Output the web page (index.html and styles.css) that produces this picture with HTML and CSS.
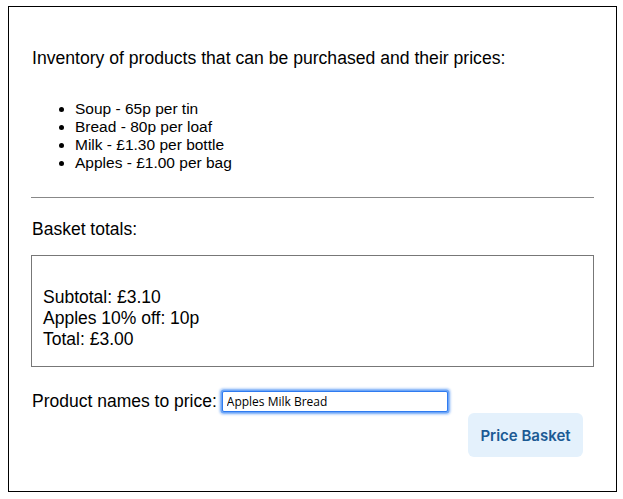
FILE: index.html
```html
<!DOCTYPE html>
<html>
<head>
<meta charset="utf-8">
<link rel="stylesheet" href="styles.css">
</head>
<body>
<div class="panel">
  <p class="intro">Inventory of products that can be purchased and their prices:</p>
  <ul class="products">
    <li>Soup - 65p per tin</li>
    <li>Bread - 80p per loaf</li>
    <li>Milk - £1.30 per bottle</li>
    <li>Apples - £1.00 per bag</li>
  </ul>
  <hr class="rule">
  <p class="heading">Basket totals:</p>
  <div class="totals">
    <div>Subtotal: £3.10</div>
    <div>Apples 10% off: 10p</div>
    <div>Total: £3.00</div>
  </div>
  <div class="form-row">
    <label class="label" for="names">Product names to price:</label>
    <input class="names" id="names" type="text" value="Apples Milk Bread">
  </div>
  <div class="actions">
    <button class="price-btn" type="button">Price Basket</button>
  </div>
</div>
</body>
</html>
```
FILE: styles.css
```css
html, body {
  margin: 0;
  padding: 0;
  background: #fff;
}
body {
  padding: 6px 0 0 8px;
  font-family: "Liberation Sans", Arial, sans-serif;
  color: #000;
}
.panel {
  box-sizing: border-box;
  width: 609px;
  height: 486px;
  border: 1px solid #000;
  padding: 0 22px;
}
.intro {
  font-size: 17.6px;
  margin: 41px 0 0 1px;
  line-height: 20px;
}
.products {
  margin: 32px 0 0 0;
  padding-left: 44px;
  font-size: 15.5px;
  line-height: 18px;
}
.rule {
  margin: 25px 0 0 0;
  border: 0;
  border-top: 1px solid #888;
  height: 0;
}
.heading {
  font-size: 17.5px;
  line-height: 20px;
  margin: 21px 0 0 1px;
}
.totals {
  margin-top: 16px;
  border: 1px solid #777;
  height: 112px;
  box-sizing: border-box;
  padding: 31px 11px 0;
  font-size: 17.5px;
  line-height: 21px;
}
.form-row {
  display: flex;
  align-items: center;
  margin-top: 24px;
  margin-left: 1px;
}
.label {
  font-size: 17.5px;
  margin-right: 5px;
}
.names {
  box-sizing: border-box;
  width: 226px;
  height: 21px;
  border: 1px solid #2f7bf0;
  outline: none;
  box-shadow: 0 0 0 1.5px #6ea6f7, 0 0 2px 2.5px rgba(110, 166, 247, 0.45);
  border-radius: 2px;
  padding: 1px 4px;
  font-family: "Open Sans", "DejaVu Sans", sans-serif;
  font-size: 12px;
  color: #000;
}
.actions {
  display: flex;
  justify-content: flex-end;
  margin-top: 1px;
  padding-right: 11px;
}
.price-btn {
  width: 115px;
  height: 44px;
  border: 0;
  border-radius: 6px;
  background: #e4f1fc;
  color: #1b5a94;
  font-family: "Inter", "Liberation Sans", sans-serif;
  font-weight: 600;
  font-size: 15px;
}
```
